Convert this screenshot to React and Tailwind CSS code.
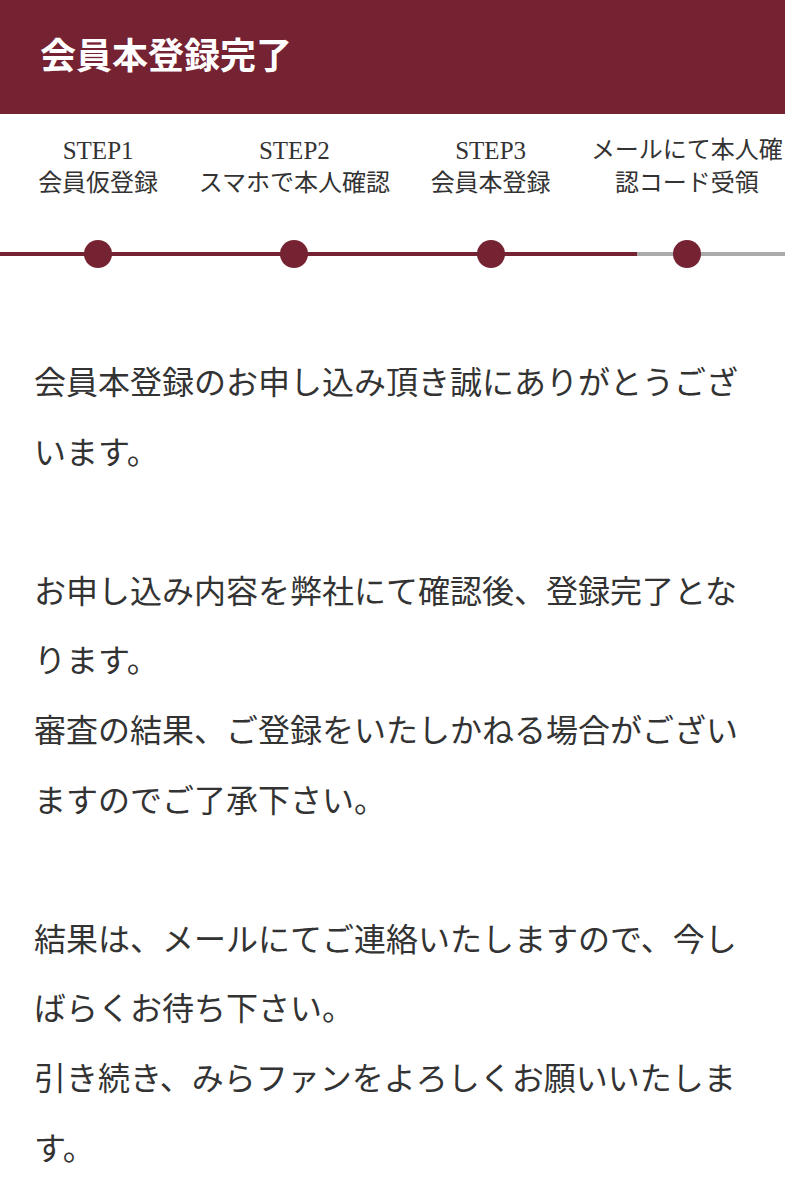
import React from "react";

const steps = [
  { top: "STEP1", bottom: "会員仮登録" },
  { top: "STEP2", bottom: "スマホで本人確認" },
  { top: "STEP3", bottom: "会員本登録" },
  { top: "メールにて本人確認コード受領", bottom: null },
];

export default function App() {
  return (
    <div className="w-[785px] min-h-[1195px] bg-white font-['Liberation_Serif','Noto_Sans_CJK_JP',serif] text-[#333333]">
      <header className="h-[114px] bg-[#752233] flex items-center pl-[40px]">
        <h1 className="text-white text-[36px] font-bold leading-none">会員本登録完了</h1>
      </header>

      <div className="pt-[20px]">
        <div className="grid grid-cols-4">
          {steps.map((s, i) => (
            <div key={i} className="text-center text-[24px] leading-[33px] h-[66px]">
              {s.bottom ? (
                <>
                  <div className="text-[25px]">{s.top}</div>
                  <div className="whitespace-nowrap">{s.bottom}</div>
                </>
              ) : (
                <div>{s.top}</div>
              )}
            </div>
          ))}
        </div>

        <div className="relative mt-[40px] h-[28px]">
          <div className="absolute left-0 right-0 top-[12px] h-[4px] bg-[#aaaaaa]" />
          <div className="absolute left-0 top-[12px] h-[4px] w-[637px] bg-[#752233]" />
          <div className="relative grid grid-cols-4 h-full">
            {steps.map((_, i) => (
              <div key={i} className="flex justify-center">
                <span className="block w-[28px] h-[28px] rounded-full bg-[#752233]" />
              </div>
            ))}
          </div>
        </div>
      </div>

      <div className="px-[34px] pt-[78px] pb-[10px] text-[32px] leading-[69.6px] font-['Noto_Sans_CJK_JP',sans-serif] text-[#333333]">
        <p>会員本登録のお申し込み頂き誠にありがとうございます。</p>
        <p>&nbsp;</p>
        <p>
          お申し込み内容を弊社にて確認後、登録完了となります。
          <br />
          審査の結果、ご登録をいたしかねる場合がございますのでご了承下さい。
        </p>
        <p>&nbsp;</p>
        <p>
          結果は、メールにてご連絡いたしますので、今しばらくお待ち下さい。
          <br />
          引き続き、みらファンをよろしくお願いいたします。
        </p>
      </div>
    </div>
  );
}
